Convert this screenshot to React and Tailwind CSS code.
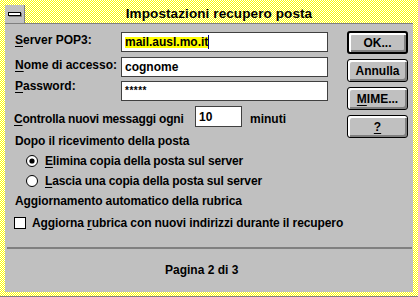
import React from "react";

const checker =
  "bg-[image:repeating-conic-gradient(#ffff00_0%_25%,#ffffff_0%_50%)] bg-[length:2px_2px]";

function Key({ children }) {
  return <span className="underline decoration-1 underline-offset-[2px]">{children}</span>;
}

function Btn({ children, isDefault }) {
  return (
    <div
      className={`flex h-[23px] w-[61px] items-center justify-center rounded-[3px] border-black bg-[#c0c0c0] shadow-[inset_2px_2px_0_#ffffff,inset_-2px_-2px_0_#808080] ${
        isDefault ? "border-2" : "border"
      }`}
    >
      {children}
    </div>
  );
}

function Field({ children, width }) {
  return (
    <div className={`flex h-[20px] items-center border border-[#404040] bg-white pl-[3px] ${width}`}>
      {children}
    </div>
  );
}

function Radio({ checked }) {
  return (
    <svg width="12" height="12" viewBox="0 0 12 12" className="shrink-0">
      <circle cx="6" cy="6" r="5.5" fill="#ffffff" stroke="#000000" strokeWidth="1" />
      {checked && <circle cx="6" cy="6" r="2.6" fill="#000000" />}
    </svg>
  );
}

export default function App() {
  return (
    <div
      className={`h-[297px] w-[418px] border-b border-[#808080] px-[5px] pb-[4px] pt-[5px] font-['Liberation_Sans',Arial,sans-serif] text-[12px] font-bold leading-[16px] text-black ${checker}`}
    >
      <div className="flex h-full flex-col">
        {/* caption */}
        <div className="flex h-[19px] shrink-0 border-b border-[#808080]">
          <div className="flex w-[20px] items-center justify-center border-r border-[#808080] bg-[#c0c0c0]">
            <div className="h-[4px] w-[13px] border border-black bg-white shadow-[1px_1px_0_#808080]" />
          </div>
          <div className="flex flex-1 items-center justify-center text-[13.5px] tracking-[0.1px]">
            Impostazioni recupero posta
          </div>
        </div>

        {/* body */}
        <div className="flex flex-1 flex-col bg-[#c0c0c0]">
          <div className="flex h-[223px]">
            <div className="flex w-[323px] flex-col pl-[10px] pt-[8px]">
              <div className="flex">
                <div className="w-[106px]">
                  <Key>S</Key>erver POP3:
                </div>
                <Field width="w-[207px]">
                  <span className="inline-block h-[11px] bg-[#ffff00] leading-[11px]">mail.ausl.mo.it</span>
                  <span className="h-[14px] w-[1px] bg-[#000080]" />
                </Field>
              </div>
              <div className="mt-[5px] flex">
                <div className="w-[106px]">
                  <Key>N</Key>ome di accesso:
                </div>
                <Field width="w-[207px]">cognome</Field>
              </div>
              <div className="mt-[4px] flex">
                <div className="-mt-[3px] w-[106px]">
                  <Key>P</Key>assword:
                </div>
                <Field width="w-[207px]">
                  <span className="text-[10px] tracking-[0.5px]">*****</span>
                </Field>
              </div>
              <div className="mt-[5px] flex items-center">
                <div className="-ml-[1px] mt-[4px] w-[181px] tracking-[-0.2px]">
                  <Key>C</Key>ontrolla nuovi messaggi ogni
                </div>
                <div className="flex h-[21px] w-[47px] items-center border border-[#404040] bg-white pl-[3px]">10</div>
                <div className="ml-[8px] mt-[4px]">minuti</div>
              </div>
              <div className="mt-[6px] tracking-[-0.1px]">Dopo il ricevimento della posta</div>
              <div className="ml-[11px] mt-[4px] flex items-center gap-[7px] tracking-[-0.15px]">
                <Radio checked />
                <span>
                  <Key>E</Key>limina copia della posta sul server
                </span>
              </div>
              <div className="ml-[11px] mt-[4px] flex items-center gap-[7px] tracking-[-0.15px]">
                <Radio />
                <span>
                  <Key>L</Key>ascia una copia della posta sul server
                </span>
              </div>
              <div className="mt-[4px] tracking-[-0.1px]">Aggiornamento automatico della rubrica</div>
              <div className="-ml-[1px] mt-[6px] flex items-center gap-[6px] whitespace-nowrap tracking-[-0.1px]">
                <div className="h-[12px] w-[12px] shrink-0 border border-black bg-white" />
                <span>
                  Aggiorna <Key>r</Key>ubrica con nuovi indirizzi durante il recupero
                </span>
              </div>
            </div>
            <div className="ml-[19px] flex flex-col gap-[5px] pt-[7px]">
              <Btn isDefault>OK...</Btn>
              <Btn>Annulla</Btn>
              <Btn>
                <span>
                  <Key>M</Key>IME...
                </span>
              </Btn>
              <Btn>
                <Key>?</Key>
              </Btn>
            </div>
          </div>
          <div className="ml-[2px] mr-[1px] h-[2px] bg-[#808080]" />
          <div className="mt-[13px] pl-[160px]">Pagina 2 di 3</div>
        </div>
      </div>
    </div>
  );
}
